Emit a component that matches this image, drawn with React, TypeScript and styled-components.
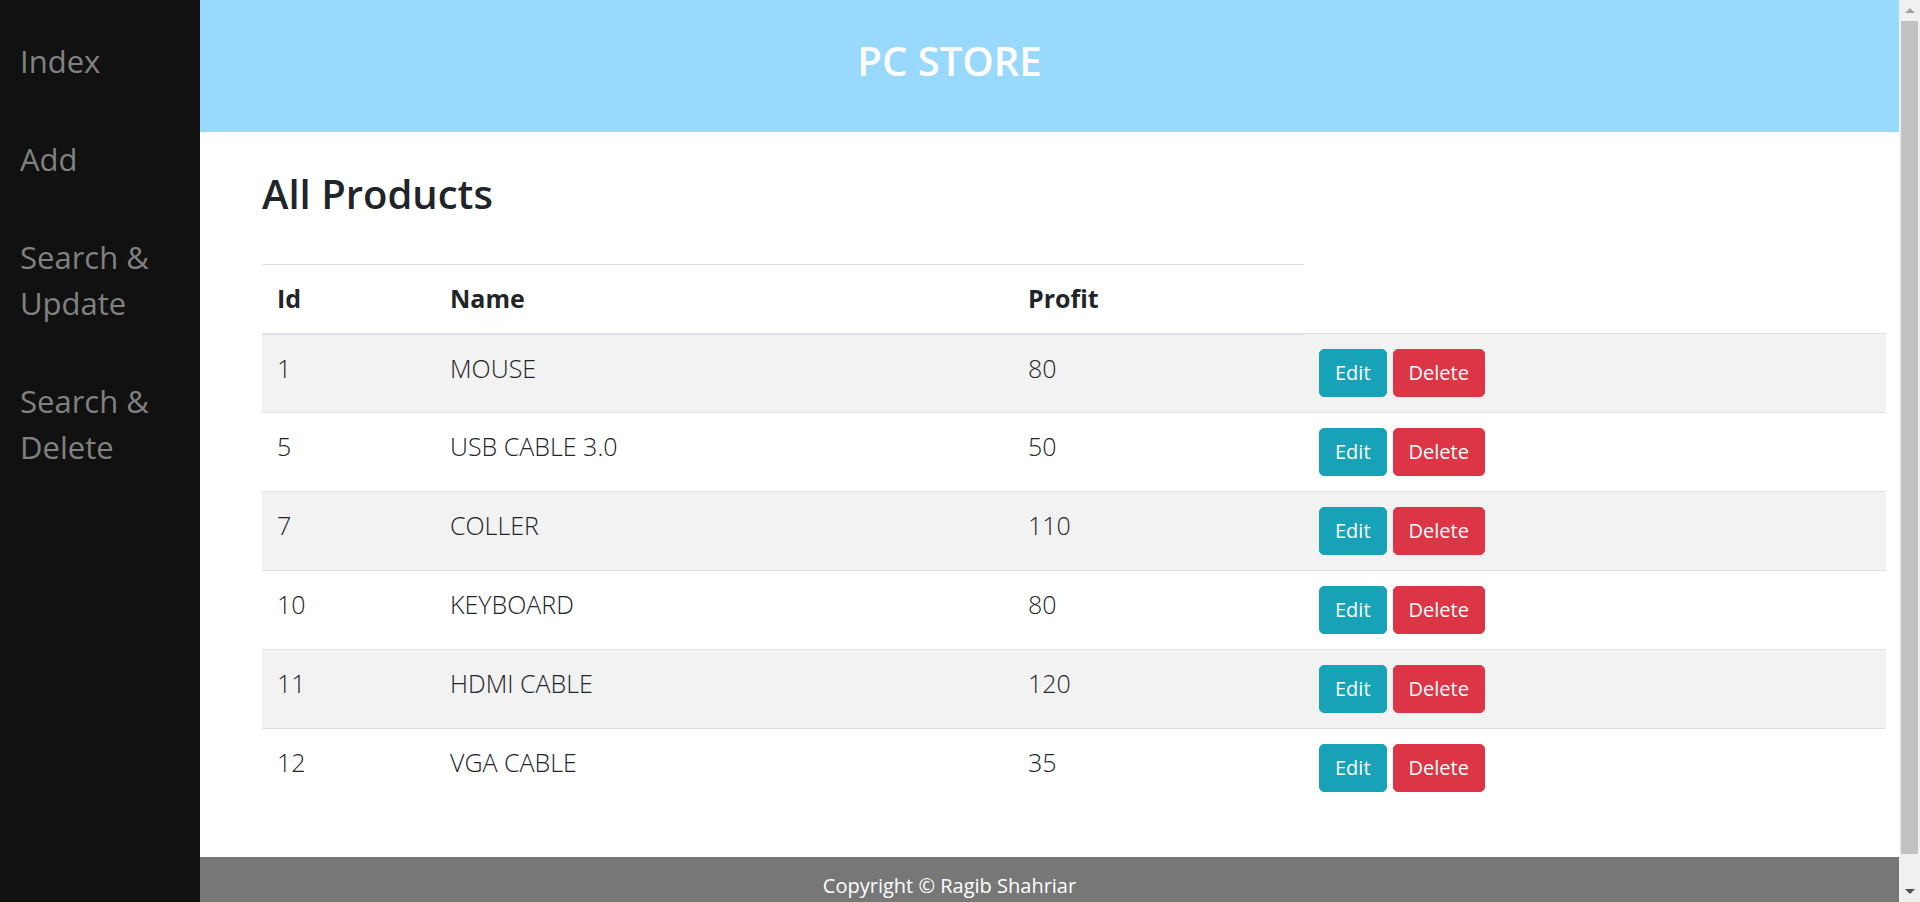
import React from 'react';
import styled, { createGlobalStyle } from 'styled-components';

const GlobalStyle = createGlobalStyle`
  * {
    box-sizing: border-box;
  }
  html,
  body {
    margin: 0;
    padding: 0;
    height: 100%;
    overflow: hidden;
  }
  body {
    font-family: 'Open Sans', 'Noto Sans', sans-serif;
    color: #212529;
    background: #fff;
  }
`;

const Page = styled.div`
  display: flex;
  height: 100vh;
`;

const SideNav = styled.nav`
  width: 200px;
  flex-shrink: 0;
  background-color: #111;
  padding-top: 12px;
`;

const NavLink = styled.a`
  display: block;
  padding: 26px 12px 26px 20px;
  font-size: 31px;
  line-height: 46px;
  color: #818181;
  text-decoration: none;
  cursor: pointer;
`;

const Main = styled.div`
  flex: 1;
  min-width: 0;
  display: flex;
  flex-direction: column;
`;

const Header = styled.header`
  height: 132px;
  flex-shrink: 0;
  background-color: #9ad9fe;
  padding: 37px 200px 0 0;
  text-align: center;
`;

const Brand = styled.h1`
  margin: 0;
  font-size: 40px;
  line-height: 48px;
  font-weight: 600;
  color: #fff;
`;

const Content = styled.main`
  flex: 1;
  padding: 37.5px 13px 0 62px;
`;

const Title = styled.h2`
  margin: 0 0 46.5px;
  font-size: 40px;
  line-height: 48px;
  font-weight: 600;
`;

const Table = styled.table`
  width: 100%;
  border-collapse: collapse;
  table-layout: fixed;
  font-size: 25px;
  font-weight: 300;
  line-height: 37.5px;
`;

const Col = styled.col<{ $width?: number }>`
  width: ${p => (p.$width ? `${p.$width}px` : 'auto')};
`;

const HeadCell = styled.th`
  text-align: left;
  font-weight: 700;
  padding: 15px;
  vertical-align: bottom;
  border-top: 1px solid #dee2e6;
  border-bottom: 2px solid #dee2e6;
`;

const Row = styled.tr<{ $striped: boolean }>`
  background-color: ${p => (p.$striped ? '#f2f2f2' : 'transparent')};
`;

const Cell = styled.td`
  padding: 15px;
  vertical-align: top;
  border-top: 1px solid #dee2e6;
`;

const Actions = styled.div`
  display: flex;
  gap: 6px;
`;

const Button = styled.button<{ $variant: 'info' | 'danger' }>`
  font-family: inherit;
  font-size: 20px;
  font-weight: 400;
  line-height: 30px;
  padding: 8px 15px;
  border-radius: 5px;
  border: 1px solid ${p => (p.$variant === 'info' ? '#17a2b8' : '#dc3545')};
  background-color: ${p => (p.$variant === 'info' ? '#17a2b8' : '#dc3545')};
  color: #fff;
  cursor: pointer;
`;

const Footer = styled.footer`
  height: 45px;
  flex-shrink: 0;
  background-color: #777;
  color: #fff;
  font-size: 20px;
  line-height: 30px;
  padding: 14px 200px 0 0;
  text-align: center;
`;

const ScrollBar = styled.div`
  width: 21px;
  flex-shrink: 0;
  background-color: #f0f0f0;
  display: flex;
  flex-direction: column;
`;

const ScrollButton = styled.div`
  height: 21px;
  display: flex;
  align-items: center;
  justify-content: center;
`;

const ScrollThumb = styled.div`
  height: 833px;
  margin: 0 2px;
  background-color: #c1c1c1;
`;

const ScrollRest = styled.div`
  flex: 1;
`;

const products = [
  { id: 1, name: 'MOUSE', profit: 80 },
  { id: 5, name: 'USB CABLE 3.0', profit: 50 },
  { id: 7, name: 'COLLER', profit: 110 },
  { id: 10, name: 'KEYBOARD', profit: 80 },
  { id: 11, name: 'HDMI CABLE', profit: 120 },
  { id: 12, name: 'VGA CABLE', profit: 35 },
];

function Arrow({ up, color }: { up: boolean; color: string }) {
  return (
    <svg width="10" height="5" viewBox="0 0 10 5">
      <path d={up ? 'M0 5 L5 0 L10 5 Z' : 'M0 0 L10 0 L5 5 Z'} fill={color} />
    </svg>
  );
}

function App() {
  return (
    <Page>
      <GlobalStyle />
      <SideNav>
        <NavLink>Index</NavLink>
        <NavLink>Add</NavLink>
        <NavLink>Search &amp; Update</NavLink>
        <NavLink>Search &amp; Delete</NavLink>
      </SideNav>
      <Main>
        <Header>
          <Brand>PC STORE</Brand>
        </Header>
        <Content>
          <Title>All Products</Title>
          <Table>
            <colgroup>
              <Col $width={173} />
              <Col $width={578} />
              <Col $width={291} />
              <Col />
            </colgroup>
            <thead>
              <tr>
                <HeadCell>Id</HeadCell>
                <HeadCell>Name</HeadCell>
                <HeadCell>Profit</HeadCell>
              </tr>
            </thead>
            <tbody>
              {products.map((p, i) => (
                <Row key={p.id} $striped={i % 2 === 0}>
                  <Cell>{p.id}</Cell>
                  <Cell>{p.name}</Cell>
                  <Cell>{p.profit}</Cell>
                  <Cell>
                    <Actions>
                      <Button $variant="info">Edit</Button>
                      <Button $variant="danger">Delete</Button>
                    </Actions>
                  </Cell>
                </Row>
              ))}
            </tbody>
          </Table>
        </Content>
        <Footer>Copyright © Ragib Shahriar</Footer>
      </Main>
      <ScrollBar>
        <ScrollButton>
          <Arrow up color="#a3a3a3" />
        </ScrollButton>
        <ScrollThumb />
        <ScrollRest />
        <ScrollButton>
          <Arrow up={false} color="#505050" />
        </ScrollButton>
      </ScrollBar>
    </Page>
  );
}

export default App;
